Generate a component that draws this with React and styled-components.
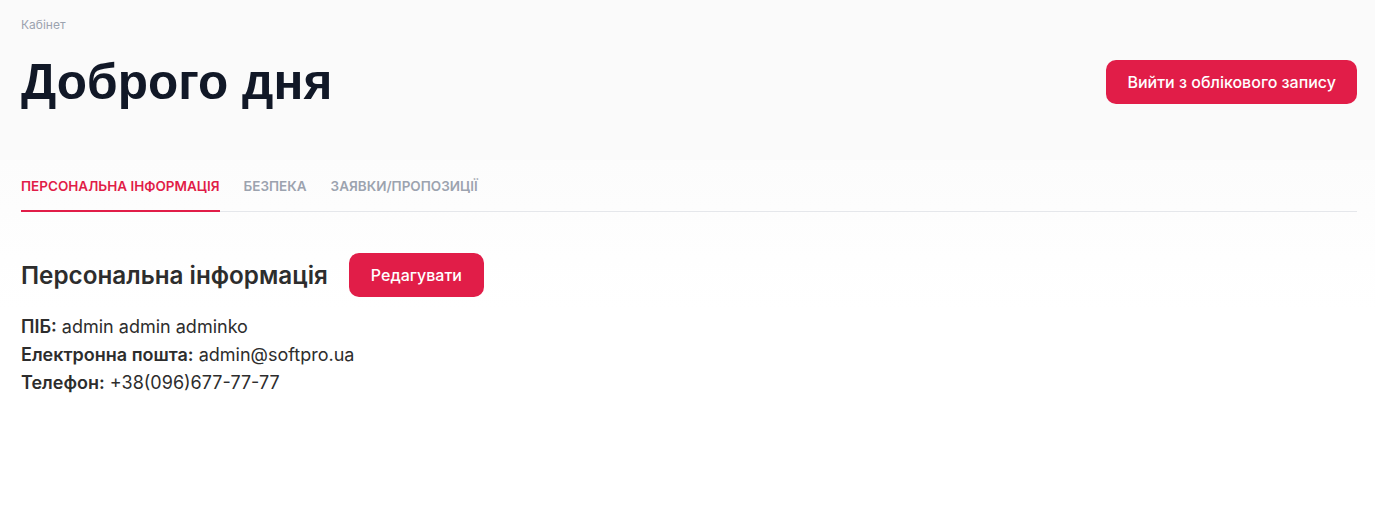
import React, { useState } from 'react';
import styled, { createGlobalStyle } from 'styled-components';

const GlobalStyle = createGlobalStyle`
    body {
        margin: 0;
        font-family: Inter, "Noto Sans", sans-serif;
        background: #fff;
    }
`;

const tabs = ['Персональна інформація', 'Безпека', 'Заявки/пропозиції'];

function App() {
    const [active, setActive] = useState(0);

    return (
        <>
            <GlobalStyle />
            <Header>
                <Crumb>Кабінет</Crumb>
                <TitleRow>
                    <Title>Доброго дня</Title>
                    <RedBtn $pad={21}>Вийти з облікового запису</RedBtn>
                </TitleRow>
            </Header>
            <Content>
                <TabBar>
                    {tabs.map((t, i) => (
                        <Tab key={t} $active={i === active} onClick={() => setActive(i)}>
                            {t}
                        </Tab>
                    ))}
                </TabBar>
                <SectionHead>
                    <SectionTitle>Персональна інформація</SectionTitle>
                    <RedBtn $pad={22}>Редагувати</RedBtn>
                </SectionHead>
                <InfoList>
                    <InfoRow><b>ПІБ:</b> admin admin adminko</InfoRow>
                    <InfoRow><b>Електронна пошта:</b> admin@softpro.ua</InfoRow>
                    <InfoRow><b>Телефон:</b> +38(096)677-77-77</InfoRow>
                </InfoList>
            </Content>
        </>
    );
}

export default App;

const Header = styled.div`
    background-color: #fafafa;
    height: 160px;
    padding: 18px 18px 0 21px;
    box-sizing: border-box;
`

const Crumb = styled.div`
    font-size: 12px;
    color: #9ca3af;
    line-height: 14px;
`

const TitleRow = styled.div`
    display: flex;
    align-items: center;
    justify-content: space-between;
    margin-top: 19px;
`

const Title = styled.h1`
    margin: 0;
    font-family: "Liberation Sans", Arial, sans-serif;
    font-weight: 700;
    font-size: 49.5px;
    line-height: 62px;
    color: #111827;
`

const RedBtn = styled.button`
    font-family: Inter, sans-serif;
    font-size: 16px;
    font-weight: 500;
    color: #fff;
    background-color: #e11d48;
    border: none;
    border-radius: 10px;
    height: 44px;
    padding: 0 ${p => p.$pad}px;
    cursor: pointer;
    display: flex;
    align-items: center;
`

const Content = styled.div`
    padding: 0 18px 0 21px;
    background: linear-gradient(#fcfcfc, #fff 150px);
    min-height: 351px;
`

const TabBar = styled.div`
    display: flex;
    gap: 24px;
    border-bottom: 1px solid #e5e7eb;
    padding-top: 18px;
`

const Tab = styled.div`
    font-size: 13.5px;
    font-weight: 600;
    text-transform: uppercase;
    color: ${p => (p.$active ? '#e11d48' : '#9ca3af')};
    padding-bottom: 16px;
    border-bottom: 2px solid ${p => (p.$active ? '#e11d48' : 'transparent')};
    margin-bottom: -1px;
    cursor: pointer;
`

const SectionHead = styled.div`
    display: flex;
    align-items: center;
    gap: 21px;
    margin-top: 41px;
`

const SectionTitle = styled.h2`
    margin: 0;
    font-size: 24.25px;
    font-weight: 600;
    color: #2d2d2d;
`

const InfoList = styled.div`
    margin-top: 16px;
`

const InfoRow = styled.div`
    font-size: 18px;
    line-height: 28px;
    color: #2d2d2d;
    b {
        font-weight: 600;
    }
`
